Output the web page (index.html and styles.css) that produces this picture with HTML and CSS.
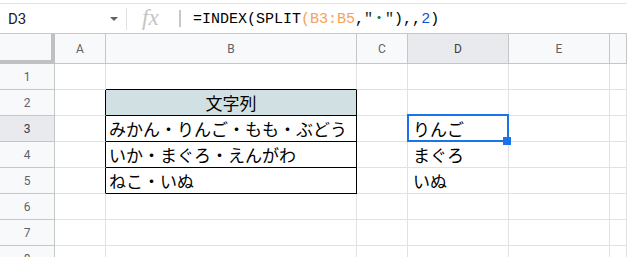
FILE: index.html
```html
<!DOCTYPE html>
<html lang="ja">
<head>
  <meta charset="UTF-8" />
  <meta name="viewport" content="width=device-width, initial-scale=1.0" />
  <title>Sheet</title>
  <link rel="stylesheet" href="styles.css">
</head>
<body>

<div class="toolbar">
  <div class="namebox">
    <span class="ref">D3</span>
    <span class="caret"></span>
  </div>
  <div class="fx">fx</div>
  <div class="sep"></div>
  <div class="formula">=INDEX(SPLIT<span class="rng">(B3:B5</span>,<span class="str">"<span class="dot">・</span>"</span>),,<span class="num">2</span>)</div>
</div>

<div class="sheet">
  <!-- column headers -->
  <div class="corner"></div>
  <div class="colhead">A</div>
  <div class="colhead">B</div>
  <div class="colhead">C</div>
  <div class="colhead active">D</div>
  <div class="colhead">E</div>
  <div class="colhead"></div>

  <!-- row 1 -->
  <div class="rowhead">1</div>
  <div class="cell"></div>
  <div class="cell edge-b"></div>
  <div class="cell"></div>
  <div class="cell"></div>
  <div class="cell"></div>
  <div class="cell"></div>

  <!-- row 2 -->
  <div class="rowhead">2</div>
  <div class="cell edge-r"></div>
  <div class="cell box title">文字列</div>
  <div class="cell"></div>
  <div class="cell"></div>
  <div class="cell"></div>
  <div class="cell"></div>

  <!-- row 3 -->
  <div class="rowhead active">3</div>
  <div class="cell edge-r"></div>
  <div class="cell box">みかん・りんご・もも・ぶどう</div>
  <div class="cell"></div>
  <div class="cell result selected">りんご</div>
  <div class="cell"></div>
  <div class="cell"></div>

  <!-- row 4 -->
  <div class="rowhead">4</div>
  <div class="cell edge-r"></div>
  <div class="cell box">いか・まぐろ・えんがわ</div>
  <div class="cell"></div>
  <div class="cell result">まぐろ</div>
  <div class="cell"></div>
  <div class="cell"></div>

  <!-- row 5 -->
  <div class="rowhead">5</div>
  <div class="cell edge-r"></div>
  <div class="cell box">ねこ・いぬ</div>
  <div class="cell"></div>
  <div class="cell result">いぬ</div>
  <div class="cell"></div>
  <div class="cell"></div>

  <!-- row 6 -->
  <div class="rowhead">6</div>
  <div class="cell"></div>
  <div class="cell"></div>
  <div class="cell"></div>
  <div class="cell"></div>
  <div class="cell"></div>
  <div class="cell"></div>

  <!-- row 7 -->
  <div class="rowhead">7</div>
  <div class="cell"></div>
  <div class="cell"></div>
  <div class="cell"></div>
  <div class="cell"></div>
  <div class="cell"></div>
  <div class="cell"></div>

  <!-- row 8 -->
  <div class="rowhead">8</div>
  <div class="cell"></div>
  <div class="cell"></div>
  <div class="cell"></div>
  <div class="cell"></div>
  <div class="cell"></div>
  <div class="cell"></div>
</div>

</body>
</html>
```

FILE: styles.css
```css
body {
  margin: 0;
  padding: 0;
  background: #fff;
  font-family: Roboto, "Liberation Sans", sans-serif;
  overflow: hidden;
  height: 257px;
}

/* formula bar */
.toolbar {
  margin-top: 3px;
  border-top: 1px solid #e3e3e3;
  border-bottom: 1px solid #c7c7c7;
  height: 29px;
  display: flex;
  align-items: center;
}

.namebox {
  width: 127px;
  height: 22px;
  box-sizing: border-box;
  border-right: 1px solid #e0e0e0;
  display: flex;
  align-items: center;
  padding-left: 8px;
}

.ref {
  font-size: 15px;
  color: #202124;
}

.caret {
  margin-left: auto;
  margin-right: 8px;
  width: 0;
  height: 0;
  border-left: 4px solid transparent;
  border-right: 4px solid transparent;
  border-top: 4px solid #5f6368;
}

.fx {
  margin-left: 15px;
  width: 22px;
  font-family: "Liberation Serif", serif;
  font-style: italic;
  font-size: 23px;
  color: #c4c4c4;
  line-height: 20px;
  margin-top: -2px;
}

.sep {
  margin-left: 15px;
  width: 2px;
  height: 17px;
  background: #c8c8c8;
}

.formula {
  margin-left: 12px;
  font-family: "Liberation Mono", "DejaVu Sans Mono", monospace;
  font-size: 15px;
  line-height: 20px;
  color: #000;
  white-space: nowrap;
}

.rng {
  color: #f4a25a;
}

.str {
  color: #222;
}

.dot {
  color: #0b8043;
  font-family: "Noto Sans CJK JP", sans-serif;
  font-size: 12px;
  font-weight: bold;
}

.num {
  color: #1155cc;
}

/* grid */
.sheet {
  display: grid;
  grid-template-columns: 55px 51px 251px 51px 101px 101px 1fr;
  grid-template-rows: 30px;
  grid-auto-rows: 26px;
  height: 223px;
  overflow: hidden;
}

.sheet > div {
  box-sizing: border-box;
  border-right: 1px solid #e2e2e2;
  border-bottom: 1px solid #e2e2e2;
  display: flex;
  align-items: center;
  white-space: nowrap;
}

.corner {
  background: #f8f9fa;
  border-right: 4px solid #c0c0c0 !important;
  border-bottom: 4px solid #c0c0c0 !important;
}

.colhead,
.rowhead {
  background: #f8f9fa;
  justify-content: center;
  color: #5f6368;
  font-size: 12px;
  border-right-color: #c4c7c5 !important;
  border-bottom-color: #c4c7c5 !important;
}

.colhead.active,
.rowhead.active {
  background: #e8eaed;
  color: #3c4043;
}

.cell {
  font-family: "Noto Sans CJK JP", sans-serif;
  font-size: 17px;
  color: #000;
  padding-left: 3px;
}

.edge-r {
  border-right-color: #000 !important;
}

.edge-b {
  border-bottom-color: #000 !important;
}

.box {
  border-right-color: #000 !important;
  border-bottom-color: #000 !important;
}

.title {
  background: #d0e0e3;
  justify-content: center;
  padding-left: 0;
}

.result {
  padding-left: 5px;
}

.selected {
  position: relative;
}

.selected::after {
  content: "";
  position: absolute;
  top: -2px;
  left: -1px;
  right: -1px;
  bottom: -1px;
  border: 2px solid #1a73e8;
}

.selected::before {
  content: "";
  position: absolute;
  right: -3px;
  bottom: -4px;
  width: 8px;
  height: 8px;
  background: #1a73e8;
  z-index: 1;
}
```
